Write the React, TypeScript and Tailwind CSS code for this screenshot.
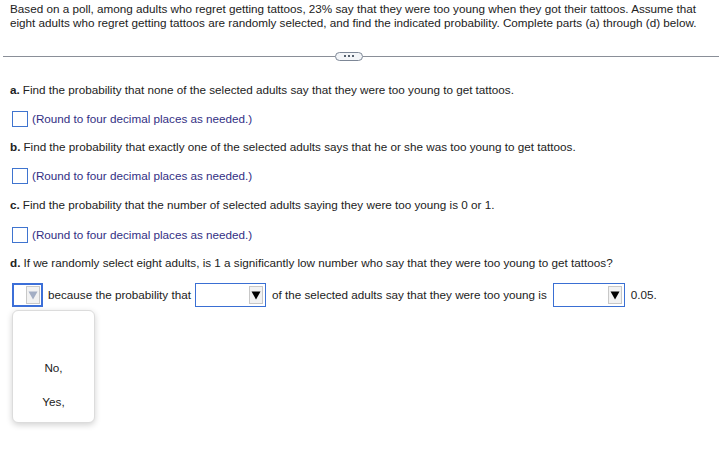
import React from 'react';

const font = { fontFamily: '"Liberation Sans", Arial, sans-serif' };

const AnswerBox = () => (
    <div className="flex items-center h-[16px] pl-[2px]">
        <div className="w-[16px] h-[16px] border border-[#3f74cf] bg-white" />
        <span className="ml-[4px] text-[#332f84]">(Round to four decimal places as needed.)</span>
    </div>
);

const Arrow = ({ light }: { light?: boolean }) => (
    <div className="w-[14px] h-[18px] border border-[#c8c8c8] bg-[#f2f2f2] flex items-center justify-center">
        <svg width="10" height="10" viewBox="0 0 10 10">
            <polygon points="0.5,1.5 9.5,1.5 5,9.5" fill={light ? '#a3aec4' : '#000'} />
        </svg>
    </div>
);

const Select = ({ width }: { width: string }) => (
    <div className={`${width} h-[24px] border border-[#3a6fd3] bg-white flex items-center justify-end pr-[2px]`}>
        <Arrow />
    </div>
);

const Question = ({ letter, text, className }: { letter: string; text: string; className: string }) => (
    <div className={`h-[20px] flex items-center whitespace-nowrap ${className}`}>
        <span className="font-bold">{letter}.</span>
        <span className="ml-[3px]">{text}</span>
    </div>
);

const App: React.FC = () => {
    return (
        <div className="bg-white w-[722px] h-[455px] text-[11.7px] text-[#222] overflow-hidden" style={font}>
            <div className="px-[10px] pt-[2px] leading-[14px] whitespace-nowrap">
                <p>
                    Based on a poll, among adults who regret getting tattoos, 23% say that they were too young when they got their tattoos. Assume that
                </p>
                <p>
                    eight adults who regret getting tattoos are randomly selected, and find the indicated probability. Complete parts (a) through (d) below.
                </p>
            </div>

            <div className="mt-[20px] h-[12px] flex items-center px-[3px]">
                <div className="w-[332px] h-px bg-[#8a8f98]" />
                <div className="w-[28px] h-[9px] rounded-full border border-[#7d8796] bg-[#f3f5f8] flex items-center justify-center gap-[2px]">
                    <span className="w-[2px] h-[2px] bg-[#55606e]" />
                    <span className="w-[2px] h-[2px] bg-[#55606e]" />
                    <span className="w-[2px] h-[2px] bg-[#55606e]" />
                </div>
                <div className="flex-1 h-px bg-[#8a8f98]" />
            </div>

            <div className="px-[10px]">
                <Question className="mt-[18px]" letter="a" text="Find the probability that none of the selected adults say that they were too young to get tattoos." />
                <div className="mt-[11px]"><AnswerBox /></div>

                <Question className="mt-[10px]" letter="b" text="Find the probability that exactly one of the selected adults says that he or she was too young to get tattoos." />
                <div className="mt-[11px]"><AnswerBox /></div>

                <Question className="mt-[11px]" letter="c" text="Find the probability that the number of selected adults saying they were too young is 0 or 1." />
                <div className="mt-[12px]"><AnswerBox /></div>

                <Question className="mt-[10px]" letter="d" text="If we randomly select eight adults, is 1 a significantly low number who say that they were too young to get tattoos?" />

                <div className="mt-[10px] flex items-center h-[24px] pl-[2px] whitespace-nowrap">
                    <div className="w-[31px] h-[24px] border-2 border-[#3c6fd8] bg-white flex items-center justify-end pr-[1px]">
                        <Arrow light />
                    </div>
                    <span className="ml-[5px]">because the probability that</span>
                    <div className="ml-[4px]"><Select width="w-[71px]" /></div>
                    <span className="ml-[6px]">of the selected adults say that they were too young is</span>
                    <div className="ml-[6px]"><Select width="w-[72px]" /></div>
                    <span className="ml-[6px]">0.05.</span>
                </div>

                <div className="mt-[3px] ml-[2px] w-[83px] h-[113px] bg-white border border-[#dcdcdc] rounded-[6px] shadow-[0_2px_6px_rgba(0,0,0,0.18)] flex flex-col items-center pt-[47px] gap-[14px]">
                    <div className="h-[20px] leading-[20px]">No,</div>
                    <div className="h-[20px] leading-[20px]">Yes,</div>
                </div>
            </div>
        </div>
    );
};

export default App;
